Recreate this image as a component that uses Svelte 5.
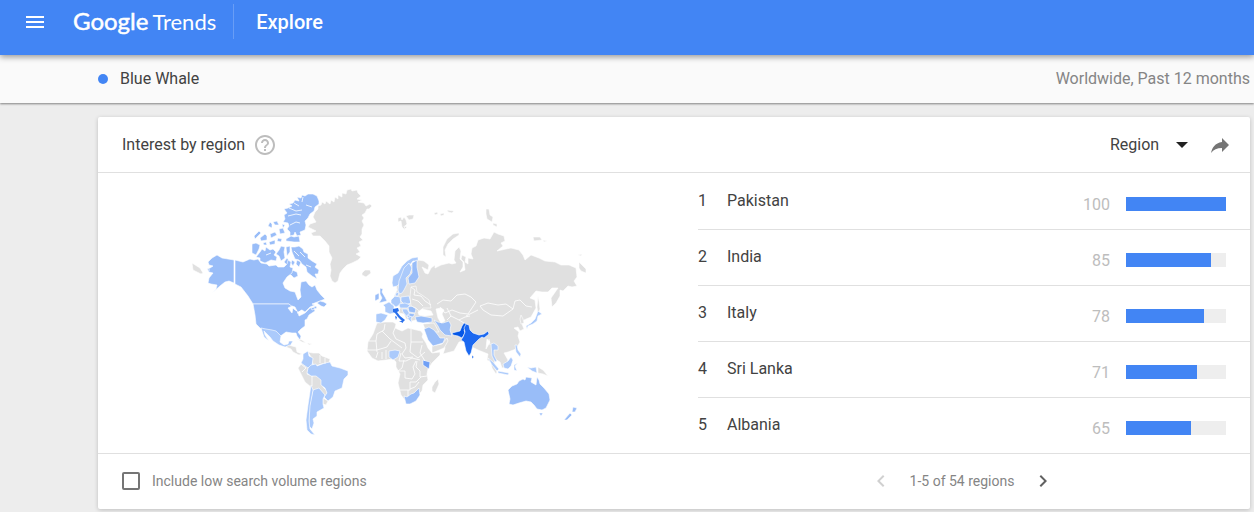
<script lang="ts">
  type Region = { name: string; value: number };
  type Shape = { tone: string; d: string };

  const regions: Region[] = [
    { name: "Pakistan", value: 100 },
    { name: "India", value: 85 },
    { name: "Italy", value: 78 },
    { name: "Sri Lanka", value: 71 },
    { name: "Albania", value: 65 },
  ];

  let includeLowVolume = $state(false);
  let resolution = $state("Region");

  // Simplified outlines, all in the same coordinate space as the map viewBox.
  const shapes: Shape[] = [
    // Greenland, Iceland, Svalbard and the Russian arctic islands
    { tone: "none", d: "M315 212L318 209 318 206 321 205 322 202 325 204 326 201 330 204 331 200 334 202 335 197 338 199 338 195 342 197 342 193 346 194 347 190 351 189 352 191 357 190 358 193 361 196 357 199 362 200 358 202 364 203 366 206 370 204 372 206 369 209 367 209 365 213 362 215 364 218 362 221 364 225 362 229 362 234 360 237 363 240 359 242 361 246 357 248 360 252 356 254 361 257 358 260 352 263 347 265 343 269 340 273 338 281 335 283 332 281 330 276 331 270 330 264 332 258 329 252 329 246 325 241 320 236 313 236 311 233 316 231 308 227 310 224 316 222 313 217z" },
    { tone: "none", d: "M362 273l3-3 5 0 1 3-5 4-4-2zM398 218l3-1 1 3 2-3 2 3 1 4-2 2v4l-3-3-1-6-3 1zM406 216l3-1 5 0-1 4-4 1z" },
    { tone: "none", d: "M434 213l3-1 1 2-3 1zM440 214l4-1 0 2-3 1zM447 210l7 1-2 2-4-1zM404 226l3 1-2 2z" },
    { tone: "none", d: "M459 233l-6 1-6 5-4 8 0 8 3 2-1-7 3-6 5-5 6-4zM486 209l3 0 1 6 3 2-1 5-5-3-1-5zM493 223l4 1 0 3-4-2zM533 237l7 0 2 3-8 1zM543 240l4 1-3 1zM578 255l4-1-1 2z" },
    { tone: "none", d: "M579 262l7 7v4l-5-2-2-3zM192 263l8 5 3 5-2 1-4-2-4-2zM538 296l1 5 1 8-2 6-1-8z" },

    // Russia down to the Chinese coast
    { tone: "none", d: "M418 260l6 1 5 4-1 5-6-3 3 6 3 1 3-6 4-3 0 3 6-3 8-2 3 1 4-1-2-3 1-9 4-4 2 4-1 8 3 3 0 5-3 5 5-2-1-8-3-3 1-4 4 2-1 5 3 2 0-6 5 1-2-5 1-6 4-2 2-6 6-2 6 1 4-7 4 2 6 2 1 5-4 2 2 3-6 5 9-2 5-1 8 2 4 5 2 5 6-5 8 3 6 3 10 1 6 3 8 0 7 3 1 9-3 4 3 5-5 1-4-1-5 5-3-1 0 6-4 7-4 4-1-9 7-10-6 0-4 4-6 0-6-1-6 7 5 2 1 8-5 9-7 3-2 4 2 5-4 2-2-4-4 1 5 4-1 4 2 6-4 7-8 3-4 1 4 7-2 7-4 1-2-6-5-3-1 8 3 5-1 2-4-6-1-6-4-2 1-6-10-4-8-4-5-5-6 1-5 9-11 3 2-6-3-8-5 2-7-2 2-3-5-6-2-6 5-1-5-4-9 0-4 1-6-2-2-5-5-1 1-6-5-3-1-8 3-6-1-6 3-2-1-8z" },
    { tone: "none", d: "M521 315l2 4 1 4-3 1-1-5zM423 324l11-1 5 9-5 0-9-3zM432 346l10-2 5-6 1 3-4 7-12 5z" },

    // Africa
    { tone: "none", d: "M377 323l8-1 8 0 3 2-1 4 7 3 6-3 13 3 2 3-1 3 4 6 2 5 4 5 8-1 0 3-8 8-4 6-1 5 1 6-5 5-1 6-6 6-11 3-4-5-3-12 2-9-4-7 0-5-3-3-7 1-8 1-6-3-5-7 1-9 5-8z" },
    { tone: "none", d: "M438 379l1 5-4 9-3-2 0-4 3-5z" },
    { tone: "low", d: "M389 351l6-1 5 1-2 6-5 3-4-3z" },
    { tone: "high", d: "M423 360l3 1 4 1-1 7-6-4z" },
    { tone: "mid", d: "M404 396l3 1 4-3 3-1 5-5 1 7-4 6-6 3-4 0z" },

    // Canadian arctic
    { tone: "mid", d: "M319 201l-2-5-4-2-5 0-3 2-3-1-1 3-4-1 2 4-4-1-2 3-4 1 3 2-4 2-4 1 3 4-3 2 1 4-2 3 5 1 1 3-2 3 3 3 0 4 4-1 1-3 2 4 4-1-1-3 5-2 1-5-1-4 3-3 2-4 4-3 1-4 4-3z" },
    { tone: "mid", d: "M286 239l5-3 3 1 5-1 1 6-6 0-8-1zM252 244l4-1 4 2-1 4-3 6-4-2zM260 252l2-3 3 2 1-4 4 3 3-1 3 3-2 3 3 2-1 4-5-1-6 3-5-2 0-3-4-1zM254 236l5-5 2 2-6 6zM260 238l5-4 2 2 0 4-6 1zM268 226l2-4 2 2 0 4zM273 222l4-1 2 4-4 0zM270 234l5-2 2 3-6 3zM279 229l4-1 2 5-5 1zM269 242l6-2 0 4-5 1zM278 238l4 1-1 3-4-1zM281 246l4 1-1 5 1 6-4 3-2-5-3-2 3-4zM286 247l4-1 0 6-3 4zM263 243l3-1 1 3-3 0zM282 224l3 1-2 3z" },
    { tone: "mid", d: "M291 247l4 0 4-1 4 3 1 3 4 2 0 4 4 3 5 3-2 3 4 3-1 4-3 0 2 5-5-3-5-4-1-5-4-3-3-4-4-1-3-7zM286 271l3-3 3 2 5 2 1 4-4 2-3-3-4 0zM297 260l4 2-2 5-3-3zM284 262l3-4 3 4-3 3zM292 260l3 2-2 4-2-3z" },

    // North America
    { tone: "mid", d: "M234 260l-6-1-6-1-5-3-5 3-4 4 1 3 4 1-3 2-3 1 2 3 4 1-4 5-1 5 3 1 6 1-1 4-4 4 8-7 5-4 4-1 5 2z" },
    { tone: "mid", d: "M235 260l8 2 7-3 4 1 4-1 3 4 6 1 2 2 7-1 2 2 6 0 3-3 1-4 3 2-1 5 3 1-1 5-5 4-4 6 2 5 5 3 5 1 3 8 3-3-1-7 1-8 5-1 3 4 3 2 3-2 2 5 4 5 4 4-5 2-8 3 3 1-5 2-5 5-3-2-7 4-1-5-5-5H253l-5-8-7-9-6-3z" },
    { tone: "mid", d: "M253 304h36l5 4 4 4 1 4 6-3 5-5 4-1 1 4-6 4-2 4-2 1 0 6-4 3-3 3 3 4-1 4-3-4-1-3-4 0-6-1-4 3-3 2-7-6h-7l-5-3-4-4-1-9zM317 303l3-2 4 1 3 2-3 3-3-1zM311 308l5-2 1 2-5 2z" },
    { tone: "low", d: "M261 328l5 1 6 1 4 1 5 5-1 6 4 3 4-1 1-3 4 0-3 5-5 1-6-2-6-4-3-4-6-6 1 4 4 6-5-4z" },
    { tone: "none", d: "M286 347l3-2 3 1 4 1 1 5 5 2-3 1-6-3-2-3zM297 339l5 1 4 3-4-1zM307 343l5 1-3 1z" },

    // South America
    { tone: "none", d: "M308 352l5 1 6 0 3 3 8 3-1 4-8 1-5 2-3-2-2-7z" },
    { tone: "none", d: "M298 368l4-5 6 3 0 5-1 3 5 2 5-1 5 5 1 7 4 4 0 5-5-2-4-4-5 1-2-4-6-5z" },
    { tone: "none", d: "M323 398l5 3-2 4-3-1z" },
    { tone: "low", d: "M303 354l5-3 1 5 4 2-1 8-4 2-7-5 2-4z" },
    { tone: "low", d: "M308 368l3-3 5-1 1 2 8-3 5-1 2 4 8 2 8 3 0 4-4 4-2 9-7 3-2 6-5 4-4-4 3-4-2-5-4-3 0-5-5-4-5 0-4-3z" },
    { tone: "low", d: "M313 390l6-2 6 7-2 4 0 5 1 4-7 4 0 4-4 3 1 4-2 6-3-3 0-18z" },
    { tone: "low", d: "M311 385l2 5-3 16-1 15 1 8 5 6-4-1-4-4-1-10 2-15z" },

    // Europe
    { tone: "low", d: "M392 283l1-7 5-3 4-7 5-5 5-3 6-1 0 4-5 0-5 6-5 7-1 7-5 5-4 1z" },
    { tone: "low", d: "M398 290l1-9 2-5 3-8 5-5 3 5-2 6-4 4 1 6-3 6-2 3-3 1z" },
    { tone: "mid", d: "M412 263l5-3 0 7 2 10-4 6-6 1-1-6 4-5 0-5z" },
    { tone: "mid", d: "M380 288l3 1-1 3 3 5 2 4-8 2 3-5-2-4zM375 295l4-2 0 6-4 2z" },
    { tone: "low", d: "M383 305l6-3 5 3 0 8-4 1-5-2 0-5zM376 314l5-1 7 2-3 5-4 3-5-1zM391 300l4-4 5 1 1 7-5 3-5-3zM396 293l3-1-1 4-3 0zM401 297l8-1 2 7-6 2-4-4z" },
    { tone: "low", d: "M399 304l6-1 5 2-2 3-8 0zM402 309l5 0 4 7-3 2-5-6zM407 315l6 0-2 4 1 4-4-4z" },
    { tone: "mid", d: "M408 307l4-1 4 3-1 4-6-1zM409 313l6 1-2 3-4-1z" },
    { tone: "none", d: "M411 287l5-1 1 6 5 3 7 5 2 8-8 0-3 4-4-4-5-2-1-9z" },
    { tone: "italy", d: "M393 309l5-1 1 3-2 1 3 4 5 4-2 2-5-5-3-4-2-1zM399 321l4 0 0 2zM395 316l2 1-1 3z" },
    { tone: "mid", d: "M415 317l6-1 6 1 5 1 0 4-9 1-6-1z" },

    // Middle East and South Asia
    { tone: "mid", d: "M434 320l4 2 5 1 6-2 2 4-1 5 2 6-7-1-5-5-2-4zM424 329l5-2 5 3 4 5 2 3 5 0-2 5-10 3-5-6z" },
    { tone: "pakistan", d: "M452 333l4-1 4-1 2-5 2-3 3 1 0 3-3 3 1 3-3 5-4-2-5-1z" },
    { tone: "india", d: "M466 324l3 1 1 5 3 3 6 2 5-1 4-3 1 3-5 4-2-1-3 2-6 6-2 8-2 3-3-5-2-9-3-2 2-3 2-5-1-4zM472 355l2 2-2 2z" },

    // East Asia and Oceania
    { tone: "low", d: "M538 311l4 3-4 2-1 5-4 3-5 2-1 3-1-3 5-3 4-4z" },
    { tone: "low", d: "M491 344l3-1 4 3 0 4-4 0 0 5 3 6-2 1-3-6zM488 358l5 4 6 7-2 2-5-6zM498 371l11 2-1 2-10-2zM503 364l5-3 3-4 2 3-2 6-3 3-4-1zM514 365l4-2-3 3 2 5-3-1zM515 345l2 0 1 5 3 4-1 3-4-5zM527 367l4 1 5-1 1 6-5-2z" },
    { tone: "none", d: "M538 367l5 3 5 6-5-2-5-1z" },
    { tone: "mid", d: "M508 390l4-4 5-2 2-3 4-2 2 1 1-3 6 1-1 4 5 3 1-8 2 3 1 4 4 4 5 6 1 6-4 8-4 2-5-1-3-4-3-3-5-1-7 2-6 2-4-1 1-5zM539 413l4 0-2 3zM573 407l4 1-2 4-3 0zM570 413l2 2-5 5-3 0z" },
  ];

  const borders =
    "M382 331l8 8 12 9M369 341h7l1-7 7-4 1-6M376 341l1 11M367 350h10l10-3 4-6M395 328l-2 5 3 6 9 4M411 329v13h12M405 343l1 5-4 6 3 4 8-1M411 342l-1 10 8 6 7-6M422 345l-2 8 5 8M378 352l-2 6M382 352v7M386 350v9M401 353l-2 8h7l6-3 8 2M404 360l-2 8-4 3h7v7l7 1 3-5-2-7 3-6M417 361l-1 6 4 4v6l7-1M400 390h10v-8h6l5-5M410 389l5-2 4-5M408 390v6"
    + "M437 304l6-4 8 1 6-6 8-1 6 3 5 5-4 6-4 6-8-1-8-3-7 3-5-6M480 306l8-3 10 2 8-1 7 5-10 7-12-1-8-5zM513 309l2-8 5-1 6 6 6 1M447 308l4 8 8 4 6-3 5-1M451 316l-4 4M459 320l5 3M466 316l12-6M411 287l4 3-1 5 7 1 4 5 6 4M412 299l6 2 5 5M489 339l1 6M301 364l5 4-4 4M312 376v10M320 355v8M325 358v6";

  // Seas and inlets cut back out of the land
  const water = "M436 309l5-1 3 2-2 4 3 7-4 2-3-5zM418 312l4-3 9 2 2 4-8 1-6-1zM288 308l4-2 3 1 2 4-2-1-2-2-1 5zM297 313l5-3-2 3zM487 339l3 3-4 7z";
  const fjords = "M289 208l7 3 6-1M288 216l8-2 5 1M294 203l5 3M290 225l6-3 4 1M303 197l-1 5M312 207l-6-2M300 252l5 5M294 251l5 5M306 265l5 2M266 255l5-2M278 264l6 1M203 270l7 0";
</script>

<div class="page">
  <header class="app-bar">
    <button type="button" class="icon-button menu" aria-label="Main menu">
      <svg width="24" height="24" viewBox="0 0 24 24"><path d="M3 18h18v-2H3v2zm0-5h18v-2H3v2zm0-7v2h18V6H3z" /></svg>
    </button>
    <a class="logo" href="#home"><span class="logo-google">Google</span><span>Trends</span></a>
    <h1>Explore</h1>
  </header>

  <div class="term-bar">
    <span class="term"><span class="dot"></span>Blue Whale</span>
    <span class="scope">Worldwide, Past 12 months</span>
  </div>

  <main>
    <section class="card">
      <div class="card-header">
        <h2>Interest by region</h2>
        <button type="button" class="icon-button help" aria-label="Help">
          <svg width="24" height="24" viewBox="0 0 24 24"><path d="M11 18h2v-2h-2v2zm1-16C6.480 2 2 6.480 2 12s4.480 10 10 10 10-4.480 10-10S17.520 2 12 2zm0 18c-4.410 0-8-3.590-8-8s3.590-8 8-8 8 3.590 8 8-3.590 8-8 8zm0-14c-2.210 0-4 1.790-4 4h2c0-1.100.9-2 2-2s2 .9 2 2c0 2-3 1.750-3 5h2c0-2.250 3-2.500 3-5 0-2.210-1.790-4-4-4z" /></svg>
        </button>
        <div class="resolution">
          <select aria-label="Resolution" bind:value={resolution}>
            <option>Region</option>
            <option>City</option>
          </select>
          <svg class="caret" width="12" height="6" viewBox="0 0 12 6" aria-hidden="true"><path d="M0 0h12L6 6z" /></svg>
        </div>
        <button type="button" class="icon-button share" aria-label="Share">
          <svg width="24" height="24" viewBox="0 0 24 24"><path d="M14 9V5l7 7-7 7v-4.100c-5 0-8.500 1.600-11 5.100 1-5 4-10 11-11z" /></svg>
        </button>
      </div>

      <div class="card-body">
        <svg class="map" viewBox="98 173 600 280" role="img" aria-label="Interest by region map">
          {#each shapes as shape}
            <path class={shape.tone} d={shape.d} />
          {/each}
          <path class="border" d={borders} />
          <path class="border" d={fjords} />
          <path class="water" d={water} />
        </svg>

        <ol class="regions">
          {#each regions as region, i}
            <li>
              <span class="rank">{i + 1}</span>
              <span class="name">{region.name}</span>
              <span class="value">{region.value}</span>
              <span class="bar"><span class="bar-fill" style="width: {region.value}%"></span></span>
            </li>
          {/each}
        </ol>
      </div>

      <div class="card-footer">
        <label class="low-volume">
          <input type="checkbox" bind:checked={includeLowVolume} />
          Include low search volume regions
        </label>
        <div class="pager">
          <button type="button" class="icon-button" aria-label="Previous" disabled>
            <svg width="24" height="24" viewBox="0 0 24 24"><path d="M15.410 7.410L14 6l-6 6 6 6 1.410-1.410L10.830 12z" /></svg>
          </button>
          <span>1-5 of 54 regions</span>
          <button type="button" class="icon-button" aria-label="Next">
            <svg width="24" height="24" viewBox="0 0 24 24"><path d="M10 6L8.590 7.410 13.170 12l-4.580 4.590L10 18l6-6z" /></svg>
          </button>
        </div>
      </div>
    </section>
  </main>
</div>

<style>
  :global(body) {
    background: #ededed;
    color: #424242;
    font-family: Roboto, "Liberation Sans", sans-serif;
    font-size: 16px;
    line-height: 24px;
  }

  .icon-button {
    display: flex;
    flex-shrink: 0;
    appearance: none;
    background: transparent;
    border: none;
    padding: 0;
    color: inherit;
    cursor: pointer;
  }

  .icon-button svg,
  .caret {
    fill: currentColor;
  }

  .app-bar {
    position: relative;
    z-index: 1;
    display: flex;
    align-items: center;
    padding: 4px 24px 16px 23px;
    background: #4285f4;
    color: #fff;
    box-shadow: 0 2px 6px rgba(0, 0, 0, 0.4);
  }

  .logo {
    display: flex;
    align-items: baseline;
    gap: 4px;
    margin-left: 26px;
    padding-right: 17px;
    border-right: 1px solid #689df6;
    color: inherit;
    font-family: Lato, sans-serif;
    font-size: 22px;
    line-height: 34px;
    text-decoration: none;
  }

  .logo-google {
    font-size: 24px;
    -webkit-text-stroke: thin #fff;
  }

  h1 {
    margin: 0 0 0 22px;
    font-size: 20px;
    font-weight: 500;
    line-height: 34px;
  }

  .term-bar {
    display: flex;
    align-items: center;
    justify-content: space-between;
    padding: 12px 4px 12px 98px;
    background: #fafafa;
    box-shadow: 0 1px 2px rgba(0, 0, 0, 0.45);
  }

  .term {
    display: flex;
    align-items: center;
    gap: 12px;
  }

  .dot {
    width: 10px;
    height: 10px;
    border-radius: 50%;
    background: #4285f4;
  }

  .scope {
    color: #858585;
  }

  main {
    padding: 14px 4px 3px 98px;
  }

  .card {
    background: #fff;
    border-radius: 2px;
    box-shadow: 0 1px 4px rgba(0, 0, 0, 0.2);
  }

  .card-header {
    display: flex;
    align-items: center;
    padding: 16px 18px 15px 24px;
    border-bottom: 1px solid #e0e0e0;
  }

  h2 {
    margin: 0;
    font-size: 16px;
    font-weight: 400;
  }

  .help {
    margin-left: 8px;
    color: #bdbdbd;
  }

  .resolution {
    position: relative;
    margin-left: auto;
  }

  select {
    display: block;
    appearance: none;
    border: none;
    padding: 0 28px 0 0;
    background: transparent;
    color: #424242;
    font: inherit;
    line-height: 24px;
  }

  /* Sits over the select's right padding */
  .caret {
    position: absolute;
    top: 9px;
    right: 0;
    color: #212121;
    pointer-events: none;
  }

  .share {
    margin-left: 20px;
    color: #757575;
  }

  .card-body {
    display: grid;
    grid-template-columns: 25fr 23fr;
  }

  .map {
    display: block;
    width: 100%;
    stroke: #fff;
    stroke-width: 0.6;
    stroke-linejoin: round;
  }

  .none {
    fill: #e0e0e0;
  }

  .low {
    fill: #abcafb;
  }

  .mid {
    fill: #99bdf8;
  }

  .high {
    fill: #6f9ff5;
  }

  .italy {
    fill: #2a70ec;
    stroke: none;
  }

  .india {
    fill: #1b68f0;
  }

  .pakistan {
    fill: #0457e7;
  }

  .border {
    fill: none;
    stroke-width: 0.8;
  }

  .water {
    fill: #fff;
  }

  .regions {
    margin: 0;
    padding: 0;
    list-style: none;
  }

  .regions li {
    display: flex;
    align-items: center;
    padding: 12px 24px 12px 0;
    border-top: 1px solid #e0e0e0;
  }

  /* The card header already draws the rule above the first row */
  .regions li:first-child {
    border-top-color: transparent;
  }

  .rank {
    width: 29px;
  }

  .name {
    flex: 1;
  }

  .rank,
  .name {
    margin-bottom: 2px;
  }

  .value {
    margin-top: 7px;
    margin-right: 16px;
    color: #bdbdbd;
  }

  .bar {
    width: 100px;
    margin-top: 5px;
    background: #eee;
  }

  .bar-fill {
    display: block;
    height: 14px;
    background: #4285f4;
  }

  .card-footer {
    display: grid;
    grid-template-columns: 25fr 23fr;
    align-items: center;
    padding: 15px 0 16px;
    border-top: 1px solid #e0e0e0;
    color: #858585;
    font-size: 14px;
  }

  .low-volume {
    display: flex;
    align-items: center;
    gap: 12px;
    padding-left: 24px;
  }

  .low-volume input {
    appearance: none;
    box-sizing: border-box;
    width: 18px;
    height: 18px;
    margin: 0;
    border: 2px solid #757575;
    border-radius: 2px;
  }

  .low-volume input:checked {
    background: #757575;
  }

  .pager {
    display: flex;
    justify-content: center;
    gap: 17px;
    padding-right: 24px;
  }

  .pager .icon-button {
    color: #616161;
  }

  .pager .icon-button:disabled {
    color: #d0d0d0;
    cursor: default;
  }
</style>
